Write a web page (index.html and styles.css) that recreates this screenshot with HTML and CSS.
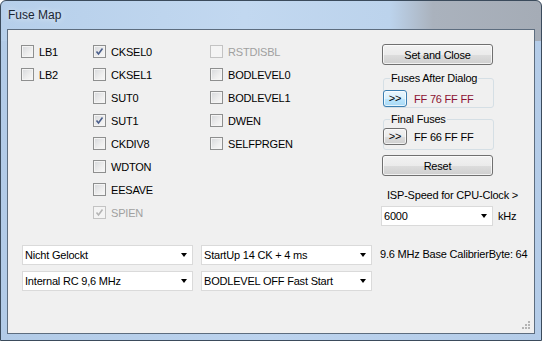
FILE: index.html
```html
<!DOCTYPE html>
<html lang="de">

<head>
  <meta charset="UTF-8" />
  <meta name="viewport" content="width=device-width, initial-scale=1.0" />
  <title>Fuse Map</title>
  <link rel="stylesheet" href="styles.css">
</head>

<body>
  <div class="window">
    <!-- Titelleiste -->
    <div class="titlebar">Fuse Map</div>

    <div class="client">
      <div class="top">
        <!-- Fuse-Bits -->
        <div class="checks">
          <div class="col">
            <div class="cb"><span class="box"></span>LB1</div>
            <div class="cb"><span class="box"></span>LB2</div>
          </div>
          <div class="col">
            <div class="cb"><span class="box"><svg viewBox="0 0 9 9"><path d="M1.5 4.5 L3.5 7 L7.5 1.5" /></svg></span>CKSEL0</div>
            <div class="cb"><span class="box"></span>CKSEL1</div>
            <div class="cb"><span class="box"></span>SUT0</div>
            <div class="cb"><span class="box"><svg viewBox="0 0 9 9"><path d="M1.5 4.5 L3.5 7 L7.5 1.5" /></svg></span>SUT1</div>
            <div class="cb"><span class="box"></span>CKDIV8</div>
            <div class="cb"><span class="box"></span>WDTON</div>
            <div class="cb"><span class="box"></span>EESAVE</div>
            <div class="cb disabled"><span class="box"><svg viewBox="0 0 9 9"><path d="M1.5 4.5 L3.5 7 L7.5 1.5" /></svg></span>SPIEN</div>
          </div>
          <div class="col">
            <div class="cb disabled"><span class="box"></span>RSTDISBL</div>
            <div class="cb"><span class="box"></span>BODLEVEL0</div>
            <div class="cb"><span class="box"></span>BODLEVEL1</div>
            <div class="cb"><span class="box"></span>DWEN</div>
            <div class="cb"><span class="box"></span>SELFPRGEN</div>
          </div>
        </div>

        <!-- rechte Spalte -->
        <div class="side">
          <button class="btn wide">Set and Close</button>

          <fieldset class="group group-after">
            <legend>Fuses After Dialog</legend>
            <div class="fuse-row">
              <button class="btn small focus">&gt;&gt;</button>
              <span class="fuses changed">FF 76 FF FF</span>
            </div>
          </fieldset>

          <fieldset class="group group-final">
            <legend>Final Fuses</legend>
            <div class="fuse-row">
              <button class="btn small">&gt;&gt;</button>
              <span class="fuses">FF 66 FF FF</span>
            </div>
          </fieldset>

          <button class="btn wide reset">Reset</button>

          <p class="isp-label">ISP-Speed for CPU-Clock &gt;</p>
          <div class="speed-row">
            <div class="combo speed"><span>6000</span><span class="arrow"></span></div>
            <span>kHz</span>
          </div>
        </div>
      </div>

      <!-- Auswahllisten -->
      <div class="bottom">
        <div class="combo"><span>Nicht Gelockt</span><span class="arrow"></span></div>
        <div class="combo"><span>StartUp 14 CK + 4 ms</span><span class="arrow"></span></div>
        <span class="calib">9.6 MHz Base CalibrierByte: 64</span>
        <div class="combo"><span>Internal RC 9,6 MHz</span><span class="arrow"></span></div>
        <div class="combo"><span>BODLEVEL OFF Fast Start</span><span class="arrow"></span></div>
      </div>

      <svg class="grip" viewBox="0 0 10 10">
        <rect x="7" y="1" width="2" height="2" />
        <rect x="4" y="4" width="2" height="2" />
        <rect x="7" y="4" width="2" height="2" />
        <rect x="1" y="7" width="2" height="2" />
        <rect x="4" y="7" width="2" height="2" />
        <rect x="7" y="7" width="2" height="2" />
      </svg>
    </div>
  </div>
</body>

</html>
```

FILE: styles.css
```css
* {
  margin: 0;
  padding: 0;
  box-sizing: border-box;
}

body {
  background: #fff;
  font: 11px "Liberation Sans", Arial, sans-serif;
  letter-spacing: -0.2px;
  color: #000;
}

.window {
  width: 542px;
  height: 341px;
  border: 1px solid #3b4b5c;
  border-radius: 6px 6px 0 0;
  padding: 0 6px 6px 6px;
  background:
    linear-gradient(90deg, #b6cfea 0%, #c2d8f0 45%, #bcd3ec 72%, #aab2bd 80%, #a5acb6 100%) top / 100% 40px no-repeat,
    linear-gradient(90deg, #b2cbe7 0%, #bcd3ee 50%, #b4cce8 100%);
}

.titlebar {
  height: 28px;
  padding: 6px 0 0 1px;
  font-size: 12px;
  line-height: 16px;
  letter-spacing: 0;
  color: #1b2633;
  text-shadow: 0 0 6px rgba(255, 255, 255, 0.8);
}

.client {
  position: relative;
  width: 528px;
  height: 305px;
  border: 1px solid #5d6d7f;
  background: #f0f0f0;
}

.top {
  display: flex;
}

.checks {
  display: grid;
  grid-template-columns: 72px 117px 172px;
  padding: 10px 0 0 13px;
}

.cb {
  display: flex;
  align-items: center;
  gap: 5px;
  height: 23px;
}

.cb .box {
  display: flex;
  align-items: center;
  justify-content: center;
  width: 13px;
  height: 13px;
  border: 1px solid #8e8f8f;
  background: linear-gradient(135deg, #d6d8db 0%, #eeeeee 60%, #f8f8f8 100%);
  box-shadow: inset 0 0 0 1px #f4f4f4;
}

.cb .box svg {
  width: 9px;
  height: 9px;
  fill: none;
  stroke: #4b5f8c;
  stroke-width: 1.6;
}

.cb.disabled {
  color: #a0a0a0;
}

.cb.disabled .box {
  border-color: #c3c3c3;
  background: #f4f4f4;
  box-shadow: none;
}

.cb.disabled .box svg {
  stroke: #b5b5b5;
}

.side {
  padding-top: 14px;
}

.btn {
  display: block;
  font: 11px "Liberation Sans", Arial, sans-serif;
  letter-spacing: -0.2px;
  color: #000;
  border: 1px solid #707070;
  border-radius: 3px;
  background: linear-gradient(#f2f2f2 0%, #ebebeb 50%, #dddddd 51%, #cfcfcf 100%);
  box-shadow: inset 0 0 0 1px rgba(255, 255, 255, 0.7);
}

.btn.wide {
  width: 111px;
  height: 21px;
}

.btn.small {
  width: 24px;
  height: 17px;
  line-height: 13px;
}

.btn.focus {
  border-color: #3c7fb1;
  background: linear-gradient(#eaf6fd 0%, #d9f0fc 50%, #bee6fd 51%, #a7d9f5 100%);
}

.group {
  width: 111px;
  margin-left: 1px;
  border: 1px solid #d5dfe5;
  border-radius: 3px;
}

.group legend {
  margin-left: 6px;
  padding: 0 1px;
  line-height: 13px;
}

.group-after {
  margin-top: 7px;
  padding: 5px 0 0 0;
}

.group-final {
  margin-top: 5px;
  padding: 2px 0 4px 0;
}

.fuse-row {
  display: flex;
  align-items: center;
  gap: 7px;
  margin-left: -1px;
}

.fuses.changed {
  color: #8b1030;
}

.reset {
  margin-top: 5px;
}

.isp-label {
  margin-top: 13px;
  padding-left: 5px;
  line-height: 13px;
}

.speed-row {
  display: flex;
  align-items: center;
  gap: 5px;
  margin-top: 4px;
  margin-left: -1px;
}

.combo {
  display: flex;
  align-items: center;
  height: 20px;
  padding: 0 5px 0 2px;
  border: 1px solid #dadada;
  background: #fff;
}

.combo.speed {
  width: 112px;
}

.combo .arrow {
  margin-left: auto;
  width: 0;
  height: 0;
  border-left: 3.5px solid transparent;
  border-right: 3.5px solid transparent;
  border-top: 4px solid #000;
}

.bottom {
  display: grid;
  grid-template-columns: 171px 171px auto;
  column-gap: 8px;
  row-gap: 6px;
  margin-top: 19px;
  padding-left: 14px;
}

.calib {
  align-self: center;
  margin-top: -3px;
}

.grip {
  position: absolute;
  right: 3px;
  bottom: 3px;
  width: 10px;
  height: 10px;
  fill: #b4b4b4;
}
```
